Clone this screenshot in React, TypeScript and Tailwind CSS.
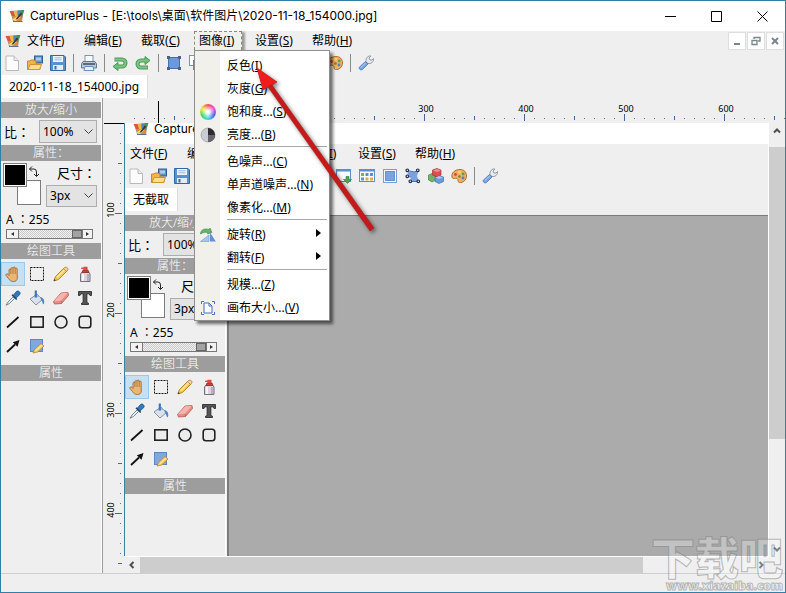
import { useId, type ReactNode } from "react";

function Svg({ children, size = 16 }: { children: ReactNode; size?: number }) {
  return (
    <svg width={size} height={size} viewBox="0 0 16 16" fill="none" aria-hidden="true" className="shrink-0">
      {children}
    </svg>
  );
}

const AppIcon = () => (
  <Svg>
    <path d="M1 3 L15 2 L13 13 L4 13 Z" fill="#8f9a80" />
    <path d="M0.500 3 H4.500 L6.500 8 H3 Z" fill="#d8553e" />
    <path d="M4.500 3 H8.500 L9 8 H6 Z" fill="#f2b642" />
    <path d="M8.500 2.500 H12 L10 8 H8.500 Z" fill="#4f83bd" />
    <path d="M12 2 H15.500 L12.500 9 H10 Z" fill="#3e9558" />
    <path d="M3 8 H12 L12.500 13 H5 Z" fill="#d98c3b" />
    <path d="M3.500 11.500 L9 7.500 L11 9.500 L6.500 13.500 Z" fill="#f4d97e" />
    <path d="M7.500 10 L12 4.500 L13.300 5.800 L8.700 11 L6.500 11.700 Z" fill="#3b3430" />
    <path d="M4 13.500 H13.500" stroke="#5d7088" />
  </Svg>
);

const NewIcon = () => (
  <Svg>
    <path d="M2 1 H10 L14.500 5.500 V15.500 H2 Z" fill="#fcfcfc" stroke="#b9b9b9" />
    <path d="M10 1 V5.500 H14.500" fill="#ececec" stroke="#b9b9b9" />
  </Svg>
);
const OpenIcon = () => (
  <Svg>
    <rect x="7.500" y="1" width="8" height="7" fill="#5f93c8" stroke="#2e5c92" />
    <rect x="9" y="2.500" width="5" height="3" fill="#a9cdec" />
    <path d="M0.500 14.500 V6 H3 L4 5 H7 L8 6 H9 V9 H13 V14.500 Z" fill="#efb54a" stroke="#c98a22" />
    <path d="M1 14.500 L3 9.500 H14.500 L12.500 14.500 Z" fill="#ffdd8c" stroke="#cf9430" />
  </Svg>
);
const SaveIcon = () => (
  <Svg>
    <path d="M0.500 0.500 H14 L15.500 2 V15.500 H0.500 Z" fill="#5793cf" stroke="#33679f" />
    <rect x="3" y="1" width="10" height="6" fill="#eef5fb" />
    <path d="M4.500 2.800 H11.500 M4.500 4.800 H11.500" stroke="#93bbdf" />
    <rect x="3" y="10" width="10" height="5" fill="#e4edf5" />
    <rect x="4.500" y="11" width="2" height="3.500" fill="#3a6da4" />
  </Svg>
);
const PrintIcon = () => (
  <Svg>
    <rect x="4" y="0.500" width="8" height="7" fill="#fafcff" stroke="#7e93ad" />
    <path d="M2 6.500 H14 L15.500 9 V13 H0.500 V9 Z" fill="#b9c6d6" stroke="#66788f" />
    <rect x="2" y="8" width="12" height="2" fill="#5c6b7e" />
    <path d="M4 11.500 H12 L13 15.500 H3 Z" fill="#e6f0fb" stroke="#6f8fb5" />
  </Svg>
);
const UndoIcon = () => (
  <Svg>
    <path d="M2.500 4.500 H10 A3.500 3.500 0 0 1 10 11.500 H5" stroke="#4b9a57" strokeWidth="4" />
    <path d="M6 7.500 L1 11.500 L6 15.500 Z" fill="#6dbd77" stroke="#4b9a57" />
    <path d="M3 4.500 H10 A3.500 3.500 0 0 1 10 11.500 H5" stroke="#7cc684" strokeWidth="2" />
  </Svg>
);
const RedoIcon = () => (
  <Svg>
    <path d="M11 5.500 H6 A3.500 3.500 0 0 0 6 12.500 H13" stroke="#4b9a57" strokeWidth="4" />
    <path d="M10 1.500 L15 5.500 L10 9.500 Z" fill="#6dbd77" stroke="#4b9a57" />
    <path d="M11 5.500 H6 A3.500 3.500 0 0 0 6 12.500 H12.500" stroke="#7cc684" strokeWidth="2" />
  </Svg>
);
const RegionIcon = () => (
  <Svg>
    <rect x="2.500" y="2.500" width="11" height="11" fill="#6c98dc" stroke="#4a6fa8" />
    {[1, 12].map((x) => [1, 12].map((y) => <rect key={x + "-" + y} x={x} y={y} width="3" height="3" fill="#4f6180" />))}
  </Svg>
);
const WindowsIcon = () => (
  <Svg>
    <rect x="0.500" y="0.500" width="10" height="10" fill="#fff" stroke="#6f95cb" />
    <rect x="4.500" y="5.500" width="10" height="9" fill="#dfeafa" stroke="#5b86c0" />
    <rect x="4.500" y="5" width="10" height="2" fill="#5b86c0" />
  </Svg>
);
const WindowDownIcon = () => (
  <Svg>
    <rect x="0.500" y="1.500" width="14" height="12" fill="#fbfdff" stroke="#5d8fcb" />
    <rect x="0.500" y="1.500" width="14" height="2" fill="#5d8fcb" />
    <path d="M10 8.500 H13 V11.500 H15.500 L11.500 15.500 L7.500 11.500 H10 Z" fill="#4da457" stroke="#2f7a3b" strokeWidth="0.600" />
  </Svg>
);
const WindowGridIcon = () => (
  <Svg>
    <rect x="0.500" y="1.500" width="15" height="12" fill="#fbfdff" stroke="#5d8fcb" />
    <rect x="0.500" y="1.500" width="15" height="2" fill="#5d8fcb" />
    <rect x="2" y="5" width="3" height="3" fill="#7fae5c" />
    <rect x="6.500" y="5" width="3" height="3" fill="#5f8fd0" />
    <rect x="11" y="5" width="3" height="3" fill="#5f8fd0" />
    <rect x="2" y="9.500" width="3" height="3" fill="#5f8fd0" />
    <rect x="6.500" y="9.500" width="3" height="3" fill="#e3a94b" />
    <rect x="11" y="9.500" width="3" height="3" fill="#e3a94b" />
  </Svg>
);
const FullscreenIcon = () => (
  <Svg>
    <rect x="1.500" y="1.500" width="13" height="13" fill="#f6faff" stroke="#7aa0d2" />
    <rect x="3.500" y="3.500" width="9" height="9" fill="#7ba3e0" stroke="#6890d0" />
  </Svg>
);
const PolygonIcon = () => (
  <Svg>
    <path d="M8 4 L13.500 3 L12 8 L14 14 H5 L6 9 L2.500 8 L3 3 Z" fill="#7ba3e0" />
    <path d="M2.500 2.500 L9 4 L13.500 2.500 M2.500 8.500 L6 9 M5 13.500 H14" stroke="#4b76b8" />
    {[[1, 1], [11.500, 1], [1, 7], [4, 12], [12, 12]].map(([x, y]) => (
      <circle key={x + "-" + y} cx={x + 1.300} cy={y + 1.300} r="1.300" fill="#e8eefb" stroke="#25344f" strokeWidth="1.200" />
    ))}
  </Svg>
);
const CubesIcon = () => (
  <Svg>
    <path d="M0.500 7 L4 5.500 L8 7 V12 L4 14 L0.500 12 Z" fill="#73b168" stroke="#4c8a45" strokeWidth="0.700" />
    <path d="M7 9 L11 7.500 L15.500 9 V13.500 L11 15.500 L7 13.500 Z" fill="#6d9bd8" stroke="#416da8" strokeWidth="0.700" />
    <path d="M4.500 2 L9 0.500 L13 2 V7 L9 9 L4.500 7 Z" fill="#dd4e4e" stroke="#a93030" strokeWidth="0.700" />
    <path d="M5 2.500 L9 4 L13 2.500 L9 1 Z" fill="#f09090" />
    <path d="M7.500 9.500 L11 11 L15 9.500 L11 8 Z" fill="#a9c8ef" />
  </Svg>
);
const PaletteIcon = () => (
  <Svg>
    <path d="M1 9 C0 5 4 1.500 9 1.500 C13 1.500 15.500 4 15.500 8 C15.500 12 12 15 8.500 14.500 C6 14 8 11.500 6 10.500 C4 9.500 2 12 1 9 Z" fill="#eeb067" stroke="#b36c28" />
    <circle cx="4.500" cy="6.500" r="1.400" fill="#d9483b" />
    <circle cx="8.500" cy="4.200" r="1.400" fill="#f6dc5a" />
    <circle cx="12.200" cy="6" r="1.400" fill="#58a05a" />
    <circle cx="12" cy="10" r="1.400" fill="#5182c4" />
    <circle cx="8.500" cy="8.500" r="1.300" fill="#6e8a3c" />
  </Svg>
);
const WrenchIcon = () => (
  <Svg>
    <path d="M8 6.500 C7.500 3 10 0.500 13 1 L11 3 L12 5 L14 5 L15.500 3.500 C16 7 13 9 10 8.500 Z" fill="#e6e9ee" stroke="#7e8896" strokeWidth="0.800" />
    <path d="M7.500 6.500 L10 9 L4.500 14.500 C3 16 0 13.500 1.500 12 Z" fill="#79a5e6" stroke="#4c74b5" strokeWidth="0.800" />
    <path d="M7.500 8 L3 12.500" stroke="#b4cef5" />
  </Svg>
);

const HandIcon = () => (
  <Svg>
    <path
      d="M4 9.500 V4 C4 2.800 5.900 2.800 5.900 4 V2.600 C5.900 1.200 8 1.200 8 2.600 V2 C8 0.600 10.200 0.600 10.200 2 V3 C10.200 1.800 12.200 1.800 12.200 3 V9 L12.300 12 C12.300 14.500 10.500 15.500 8.500 15.500 C6 15.500 4.800 14.500 3.500 12.500 L1 9.500 C0.300 8.200 2 7.200 3 8.300 Z"
      fill="#eab676"
      stroke="#a26a34"
      strokeWidth="0.900"
    />
    <path d="M5.900 4 V8 M8 3 V8 M10.200 3 V8" stroke="#a26a34" strokeWidth="0.800" />
  </Svg>
);
const MarqueeIcon = () => (
  <Svg>
    <rect x="1.500" y="1.500" width="13" height="13" stroke="#111" strokeDasharray="2 1" />
  </Svg>
);
const PencilIcon = () => (
  <Svg>
    <path d="M0.800 15 L2.500 10.500 L11 2 L14 5 L5.500 13.500 Z" fill="#f5c84b" stroke="#b07d1e" strokeWidth="0.900" />
    <path d="M10.500 2.500 L12 1.200 C13.500 0.500 15.800 2.500 14.900 4 L13.500 5.500 Z" fill="#f0d0a0" stroke="#a8773b" strokeWidth="0.700" />
    <path d="M4 11.500 L11.500 4" stroke="#fce9a0" strokeWidth="1.400" />
    <path d="M0.800 15 L1.500 13 L2.800 14.300 Z" fill="#333" />
  </Svg>
);
const SprayIcon = () => (
  <Svg>
    <path d="M3.500 15.500 V8 L5 6 H11.500 L13 8 V15.500 Z" fill="#d9d5de" stroke="#77717e" />
    <path d="M5 6.500 L6 4 H11 L12 6.500 Z" fill="#c8413d" stroke="#8c2622" strokeWidth="0.700" />
    <path d="M6.500 0.800 H10.500 V4 H6.500 Z M4.500 1.500 H7 V3 H4 Z" fill="#e04844" />
    <path d="M6 8 V15" stroke="#fff" strokeWidth="1.500" />
    <path d="M11 8 V15" stroke="#a9a3b0" strokeWidth="1.500" />
  </Svg>
);
const DropperIcon = () => (
  <Svg>
    <path d="M8 5.500 L11.500 1.500 C13.500 0 16 2.500 14.800 4.500 L10.800 8.300 Z" fill="#2f7bbf" stroke="#1d5288" strokeWidth="0.800" />
    <path d="M7 4.800 L11.700 9.500" stroke="#23446b" strokeWidth="1.500" />
    <path d="M8 7 L3 12 L1 15.200 L4.500 13.500 L9.500 8.500 Z" fill="#dcecf8" stroke="#5d7387" strokeWidth="0.800" />
  </Svg>
);
const BucketIcon = () => (
  <Svg>
    <path d="M1 9 L8 4 L13.500 9.500 L7 15 Z" fill="#dbe1ea" stroke="#7c8798" strokeWidth="0.900" />
    <path d="M4 7.500 L8.500 4.500 L11 7 Z" fill="#9fbbe0" />
    <path d="M6.800 0.500 V7.500" stroke="#3c76b8" strokeWidth="2.200" />
    <path d="M12 7 C15.500 8.500 15.800 12 14.800 14.500 C13 13.500 13.500 10.500 11.500 9 Z" fill="#4d86cc" />
  </Svg>
);
const EraserIcon = () => (
  <Svg>
    <path d="M0.500 11.500 L8 3 L15 2.500 L15.500 5.500 L8.500 13.500 L1.500 14 Z" fill="#e88c86" stroke="#b35853" strokeWidth="0.800" />
    <path d="M1 11.300 L8.200 3.300 L14.800 2.800 L8 10.800 Z" fill="#f6b3ac" />
    <path d="M8 10.800 L8.500 13.500" stroke="#b35853" strokeWidth="0.700" />
  </Svg>
);
const TextIcon = () => (
  <Svg>
    <path d="M1.500 1.500 H14.500 V5.500 H13 L12 3.800 H9.900 V12.500 L11.500 13.200 V14.500 H4.500 V13.200 L6.100 12.500 V3.800 H4 L3 5.500 H1.500 Z" fill="#555" stroke="#222" strokeWidth="0.800" />
  </Svg>
);
const LineIcon = () => (
  <Svg>
    <path d="M2 13.500 L13.500 3" stroke="#111" strokeWidth="1.700" />
  </Svg>
);
const RectIcon = () => (
  <Svg>
    <rect x="1.800" y="2.800" width="12.400" height="10.400" fill="#ececec" stroke="#222" strokeWidth="1.600" />
  </Svg>
);
const EllipseIcon = () => (
  <Svg>
    <circle cx="8" cy="8" r="6" fill="#ececec" stroke="#222" strokeWidth="1.600" />
  </Svg>
);
const RoundRectIcon = () => (
  <Svg>
    <rect x="2.200" y="2.200" width="11.600" height="11.600" rx="2.800" fill="#ececec" stroke="#222" strokeWidth="1.600" />
  </Svg>
);
const ArrowIcon = () => (
  <Svg>
    <path d="M2 14 L10 6.500" stroke="#111" strokeWidth="1.800" />
    <path d="M14.500 2 L12.500 8.800 L7.800 4.200 Z" fill="#111" />
  </Svg>
);
const NoteIcon = () => (
  <Svg>
    <rect x="1.500" y="1.500" width="12" height="12" fill="#7fa8dc" stroke="#5e87bd" />
    <path d="M4 15 L5.500 11.500 L12 5.500 L15 8 L8.500 14 Z" fill="#f7d36c" stroke="#b5852b" strokeWidth="0.800" />
    <path d="M7 12.500 L13 7" stroke="#fff2b5" />
  </Svg>
);

const ColorWheel = () => (
  <span className="size-4 rounded-full bg-[radial-gradient(circle,#ffffff_10%,transparent_60%),conic-gradient(#f0505a,#f050e0,#5060f0,#40d8f0,#40d860,#f0e840,#f0505a)]" />
);
const ContrastIcon = () => (
  <Svg>
    <circle cx="8" cy="8" r="7" fill="#c9ccd3" stroke="#999" strokeWidth="0.700" />
    <path d="M8 1 A7 7 0 0 1 8 15 Z" fill="#2c2c30" />
    <path d="M8 8 H15 A7 7 0 0 1 8 15 Z" fill="#66666c" />
  </Svg>
);
const RotateIcon = () => (
  <Svg>
    <path d="M0.500 14.500 L9 8 V14.500 Z" fill="#a7c8ee" stroke="#6c98cc" strokeWidth="0.600" />
    <path d="M10 5.500 L15.800 14.500 H10 Z" fill="#5f91d2" />
    <path d="M0.500 7 C0.500 2.500 5 1 9 2.500 L10 1 L12 5.500 L7.500 7 L8 5.500 C5 5 3 5.500 0.500 7 Z" fill="#69b06b" stroke="#3d8a45" strokeWidth="0.600" />
  </Svg>
);
const CanvasIcon = () => (
  <Svg>
    <path d="M1.500 4 V1.500 H4 M12 1.500 H14.500 V4 M1.500 12 V14.500 H4 M12 14.500 H14.500 V12" stroke="#4a6fc0" />
    <path d="M4 3 H9 L12 6 V13 H4 Z" fill="#f8faff" stroke="#4a6fc0" />
    <path d="M9 3 V6 H12" stroke="#4a6fc0" />
  </Svg>
);

type Item = { label: string; key: string; icon?: ReactNode; sub?: boolean };
const imageMenu: Item[][] = [
  [
    { label: "反色", key: "I" },
    { label: "灰度", key: "G" },
    { label: "饱和度...", key: "S", icon: <ColorWheel /> },
    { label: "亮度...", key: "B", icon: <ContrastIcon /> },
  ],
  [
    { label: "色噪声...", key: "C" },
    { label: "单声道噪声...", key: "N" },
    { label: "像素化...", key: "M" },
  ],
  [
    { label: "旋转", key: "R", icon: <RotateIcon />, sub: true },
    { label: "翻转", key: "F", sub: true },
  ],
  [
    { label: "规模...", key: "Z" },
    { label: "画布大小...", key: "V", icon: <CanvasIcon /> },
  ],
];

const Mnemonic = ({ label, k }: { label: string; k: string }) => (
  <span className="whitespace-nowrap">
    {label}(<u>{k}</u>)
  </span>
);

function ImageMenu() {
  return (
    <div role="menu" className="absolute top-[19px] left-px z-20 w-[136px] border border-[#8f8f8f] bg-[linear-gradient(to_right,#f1f0eb_25px,#ffffff_25px)] pt-[3px] pb-px shadow-[3px_3px_3px_rgba(0,0,0,0.55)]">
      {imageMenu.map((group, i) => (
        <div key={i}>
          {i > 0 && <div className="mr-[2px] ml-8 h-1 border-t border-[#a8a8a8]" />}
          {group.map((item) => (
            <button key={item.key} role="menuitem" className="flex h-[23px] w-full items-center gap-[7px] pr-2 pl-[5px] text-left">
              <span className="flex w-5 items-center">{item.icon}</span>
              <span className="flex-1">
                <Mnemonic label={item.label} k={item.key} />
              </span>
              {item.sub && (
                <svg width="5" height="8" viewBox="0 0 5 8" className="mb-1" aria-hidden="true">
                  <path d="M0 0 L5 4 L0 8 Z" fill="#000" />
                </svg>
              )}
            </button>
          ))}
        </div>
      ))}
    </div>
  );
}

const menus = [
  ["文件", "F"],
  ["编辑", "E"],
  ["截取", "C"],
  ["图像", "I"],
  ["设置", "S"],
  ["帮助", "H"],
];

function MenuBar({ open, icon }: { open?: boolean; icon?: boolean }) {
  return (
    <nav className="flex h-5 shrink-0 items-stretch">
      {icon && (
        <span className="flex w-[21px] items-center pl-1">
          <AppIcon />
        </span>
      )}
      {menus.map(([label, k]) => (
        <div key={k} className="relative w-[57px] shrink-0">
          <button
            className={
              open && k === "I"
                ? "ml-px flex h-[19px] w-12 items-center border border-b-0 border-dashed border-[#8a8a7a] bg-[#f1f1ec] pl-1 shadow-[3px_1px_2px_rgba(0,0,0,0.35)]"
                : "flex h-5 items-center pl-[5px]"
            }
          >
            <Mnemonic label={label} k={k} />
          </button>
          {open && k === "I" && <ImageMenu />}
        </div>
      ))}
      {icon && (
        <div className="ml-auto flex gap-px pt-px pr-px">
          {["最小化", "还原", "关闭"].map((name, i) => (
            <button key={name} aria-label={name} className="flex size-[18px] items-center justify-center border border-[#dedede] bg-white">
              <svg width="10" height="10" viewBox="0 0 10 10" fill="none" stroke="#7a868c" strokeWidth="2" aria-hidden="true">
                {i === 0 && <path d="M2 8 H8" />}
                {i === 1 && <path d="M3 3 V1.500 H9 V5 H7 M1 4.500 H6 V8.500 H1 Z" strokeWidth="1.300" />}
                {i === 2 && <path d="M2 2 L8 8 M8 2 L2 8" />}
              </svg>
            </button>
          ))}
        </div>
      )}
    </nav>
  );
}

const toolbarGroups: [string, () => ReactNode][][] = [
  [["新建", NewIcon], ["打开", OpenIcon], ["保存", SaveIcon]],
  [["打印", PrintIcon]],
  [["撤消", UndoIcon], ["重做", RedoIcon]],
  [
    ["区域", RegionIcon],
    ["窗口", WindowsIcon],
    ["滚动窗口", WindowDownIcon],
    ["窗口网格", WindowGridIcon],
    ["全屏", FullscreenIcon],
    ["多边形", PolygonIcon],
    ["对象", CubesIcon],
    ["调色板", PaletteIcon],
  ],
  [["选项", WrenchIcon]],
];

function Toolbar() {
  return (
    <div role="toolbar" className="-ml-px flex h-[23px] shrink-0 items-center">
      {toolbarGroups.map((group, i) => (
        <div key={i} className="flex shrink-0 items-center">
          {i > 0 && (
            <span className="flex w-2 justify-center">
              <span className="h-[18px] w-px bg-[#8a8a8a]" />
            </span>
          )}
          {group.map(([name, Icon]) => (
            <button key={name} aria-label={name} className="flex h-[22px] w-[23px] items-center justify-center">
              <Icon />
            </button>
          ))}
        </div>
      ))}
    </div>
  );
}

const tools: [string, () => ReactNode][] = [
  ["移动", HandIcon],
  ["选择", MarqueeIcon],
  ["铅笔", PencilIcon],
  ["喷枪", SprayIcon],
  ["吸管", DropperIcon],
  ["填充", BucketIcon],
  ["橡皮", EraserIcon],
  ["文字", TextIcon],
  ["直线", LineIcon],
  ["矩形", RectIcon],
  ["椭圆", EllipseIcon],
  ["圆角矩形", RoundRectIcon],
  ["箭头", ArrowIcon],
  ["便笺", NoteIcon],
];

const Header = ({ children }: { children: ReactNode }) => (
  <h2 className="h-4 bg-[#9d9d9d] text-center text-[12px] leading-4 font-light text-white">{children}</h2>
);

function Combo({ id, value, className }: { id: string; value: string; className: string }) {
  return (
    <div className={"relative " + className}>
      <select id={id} className="h-full w-full appearance-none border border-[#adadad] bg-[#e3e3e3] pl-[3px] text-[12px] text-black">
        <option>{value}</option>
      </select>
      <svg width="9" height="6" viewBox="0 0 9 6" fill="none" className="pointer-events-none absolute top-1/2 right-1 -translate-y-1/2" aria-hidden="true">
        <path d="M0.500 0.500 L4.500 4.500 L8.500 0.500" stroke="#444" />
      </svg>
    </div>
  );
}

function SidePanel() {
  const id = useId();
  return (
    <aside className="w-[101px] shrink-0 border-r border-white pt-1">
      <Header>放大/缩小</Header>
      <div className="flex h-[27px] items-center justify-between pr-1 pl-[3px]">
        <label htmlFor={id + "zoom"} className="w-[35px] whitespace-nowrap font-['Noto_Sans_CJK_TC',sans-serif] text-[13px]">比：</label>
        <Combo id={id + "zoom"} value="100%" className="h-[23px] w-[58px]" />
      </div>
      <Header>属性：</Header>
      <div className="flex h-[49px] justify-between pt-[2px] pr-1 pl-[2px]">
        <div className="grid h-[42px] w-10 grid-cols-[14px_10px_14px] grid-rows-[17px_7px_18px]">
          <button aria-label="背景色" className="col-start-2 col-end-4 row-start-2 row-end-4 border border-[#7c7c7c] bg-white" />
          <button aria-label="前景色" className="col-start-1 col-end-3 row-start-1 row-end-3 border border-[#7c7c7c] bg-black outline-1 -outline-offset-2 outline-white" />
          <button aria-label="交换颜色" className="col-start-3 row-start-1 pl-[2px]">
            <svg width="10" height="12" viewBox="0 0 10 12" fill="none" stroke="#222" aria-hidden="true">
              <path d="M3 0.500 L0.500 3 L3 5.500 M0.500 3 H5 Q7.500 3 7.500 6 V10 M5 8 L7.500 10.500 L10 8" />
            </svg>
          </button>
        </div>
        <div className="flex w-[51px] flex-col gap-[2px]">
          <label htmlFor={id + "size"} className="h-5 whitespace-nowrap pl-[11px] font-['Noto_Sans_CJK_TC',sans-serif] text-[13px] leading-5">尺寸：</label>
          <Combo id={id + "size"} value="3px" className="h-[22px] w-full" />
        </div>
      </div>
      <div className="h-[33px] pr-2 pl-[5px]">
        <label htmlFor={id + "alpha"} className="block h-[19px] whitespace-pre font-['Noto_Sans','Noto_Sans_CJK_TC',sans-serif] text-[12px] leading-[19px]">A ：255</label>
        <div className="flex h-[10px] items-stretch border border-[#777]">
          <button aria-label="减小" className="flex w-3 items-center justify-center border-r border-[#777] bg-[#f2f2f2]">
            <svg width="3" height="4" viewBox="0 0 3 4" aria-hidden="true"><path d="M3 0 V4 L0 2 Z" fill="#333" /></svg>
          </button>
          <input
            id={id + "alpha"}
            type="range"
            min="0"
            max="255"
            defaultValue="255"
            className="h-2 w-0 flex-1 appearance-none bg-[repeating-conic-gradient(#c9c9c9_0_25%,#f2f2f2_0_50%)] bg-size-[2px_2px] [&::-webkit-slider-thumb]:h-2 [&::-webkit-slider-thumb]:w-[10px] [&::-webkit-slider-thumb]:appearance-none [&::-webkit-slider-thumb]:border [&::-webkit-slider-thumb]:border-[#666] [&::-webkit-slider-thumb]:bg-[#a3a3a3]"
          />
          <button aria-label="增大" className="flex w-[10px] items-center justify-center border-l border-[#777] bg-[#f2f2f2]">
            <svg width="3" height="4" viewBox="0 0 3 4" aria-hidden="true"><path d="M0 0 V4 L3 2 Z" fill="#333" /></svg>
          </button>
        </div>
      </div>
      <Header>绘图工具</Header>
      <div className="grid grid-cols-[repeat(4,24px)] pt-[3px] pb-[7px]">
        {tools.map(([name, Icon], i) => (
          <button
            key={name}
            aria-label={name}
            className={"flex h-6 items-center justify-center border " + (i === 0 ? "border-[#9cc9ea] bg-[#c6e0f3]" : "border-transparent")}
          >
            <Icon />
          </button>
        ))}
      </div>
      <Header>属性</Header>
    </aside>
  );
}

const hundreds = [3, 4, 5, 6];
const tens = Array.from({ length: 120 }, (_, i) => i);

function TopRuler() {
  return (
    <svg className="h-[25px] w-full shrink-0" aria-hidden="true">
      {tens.slice(1).map((n) => {
        const x = 21 + n * 10;
        if (n % 10 === 0) return <rect key={n} x={x} y="16" width="1" height="7" fill="#45649a" />;
        if (n % 5 === 0) return <rect key={n} x={x} y="18" width="1" height="4" fill="#45649a" />;
        return <rect key={n} x={x} y="20" width="1" height="1" fill="#5b74a3" />;
      })}
      {hundreds.map((h) => (
        <text key={h} x={h * 100 + 23} y="14" textAnchor="middle" className="fill-black font-['Noto_Sans'] text-[9px]">
          {h * 100}
        </text>
      ))}
      <rect x="55" y="3" width="1" height="22" fill="#000" />
    </svg>
  );
}

function LeftRuler() {
  return (
    <svg className="h-full w-[21px] shrink-0" aria-hidden="true">
      <rect x="1" y="0" width="20" height="1" fill="#000" />
      {tens.slice(2).map((n) => {
        const y = n * 10 - 10;
        if (n % 10 === 0) return <rect key={n} x="12" y={y} width="7" height="1" fill="#45649a" />;
        if (n % 5 === 0) return <rect key={n} x="15" y={y} width="4" height="1" fill="#45649a" />;
        return <rect key={n} x="17" y={y} width="1" height="1" fill="#5b74a3" />;
      })}
      {[1, 2, 3, 4].map((h) => (
        <text key={h} x={-(h * 100 - 13)} y="11" textAnchor="middle" transform="rotate(-90)" className="fill-black font-['Noto_Sans'] text-[9px]">
          {h * 100}
        </text>
      ))}
    </svg>
  );
}

function Chevron({ d, label }: { d: string; label: string }) {
  return (
    <button aria-label={label} className="flex size-4 shrink-0 items-center justify-center">
      <svg width="8" height="8" viewBox="0 0 8 8" fill="none" stroke="#505050" strokeWidth="2" aria-hidden="true">
        <path d={d} />
      </svg>
    </button>
  );
}

function Chrome({ title, tab, nested, children }: { title: string; tab: string; nested?: boolean; children: ReactNode }) {
  return (
    <>
      <header className="flex h-[30px] shrink-0 items-center bg-white pl-2">
        <AppIcon />
        <h1 className="ml-[5px] flex-1 whitespace-nowrap font-['Inter','Noto_Sans_CJK_SC',sans-serif] text-[12px]">{title}</h1>
        {!nested && (
          <div className="flex">
            {["M0 5.500 H11", "M0.500 0.500 H10.500 V10.500 H0.500 Z", "M0.500 0.500 L10.500 10.500 M10.500 0.500 L0.500 10.500"].map((d, i) => (
              <button key={d} aria-label={["最小化", "最大化", "关闭"][i]} className="flex h-7 w-[46px] items-center justify-center">
                <svg width="11" height="11" viewBox="0 0 11 11" fill="none" stroke="#000" aria-hidden="true">
                  <path d={d} />
                </svg>
              </button>
            ))}
          </div>
        )}
      </header>
      <MenuBar open={!nested} icon={!nested} />
      <Toolbar />
      <div className="flex h-6 shrink-0 items-stretch pt-px">
        <button className="border-r border-[#dcdcdc] bg-white px-2 text-[12px]">{tab}</button>
      </div>
      <div className="flex min-h-0 flex-1">
        <SidePanel />
        {children}
      </div>
    </>
  );
}

export default function App() {
  return (
    <div className="relative flex h-screen flex-col overflow-hidden border border-[#2f7fa8] bg-[#efefef] font-['Noto_Sans','Noto_Sans_CJK_SC',sans-serif] text-[12px] text-black">
      <Chrome title="CapturePlus - [E:\tools\桌面\软件图片\2020-11-18_154000.jpg]" tab="2020-11-18_154000.jpg">
        <main className="flex min-w-0 flex-1 flex-col border-l border-[#9a9a9a]">
          <TopRuler />
          <div className="flex min-h-0 flex-1">
            <LeftRuler />
            <div className="flex min-w-0 flex-1 flex-col">
              <div className="flex min-h-0 flex-1">
                <div className="min-w-0 flex-1 overflow-hidden border-r border-b border-white">
                  <div className="-mt-[9px] flex h-[600px] flex-col border-l border-[#3d7f9f] bg-[#efefef]">
                    <Chrome title="CapturePlus" tab="无截取" nested>
                      <div className="mt-1 ml-px flex-1 border-t border-l-2 border-[#7b7b7b] bg-[#ababab]" />
                    </Chrome>
                  </div>
                </div>
                <div className="flex w-4 shrink-0 flex-col">
                  <Chevron label="向上" d="M1 5.500 L4 2.500 L7 5.500" />
                  <div className="mt-2 min-h-0 flex-1">
                    <div className="h-[74%] bg-[#cdcdcd]" />
                  </div>
                  <Chevron label="向下" d="M1 2.500 L4 5.500 L7 2.500" />
                </div>
              </div>
              <div className="flex h-4 shrink-0 pr-4">
                <Chevron label="向左" d="M5.500 1 L2.500 4 L5.500 7" />
                <div className="min-w-0 flex-1">
                  <div className="h-full w-[82%] bg-[#cdcdcd]" />
                </div>
                <Chevron label="向右" d="M2.500 1 L5.500 4 L2.500 7" />
              </div>
            </div>
          </div>
        </main>
      </Chrome>
      <footer className="h-[19px] shrink-0 border-t border-[#cfcfcf]" />

      <svg width="130" height="180" viewBox="0 0 130 180" className="pointer-events-none absolute top-[60px] left-[250px] z-30 drop-shadow-[2px_2px_2px_rgba(0,0,0,0.5)]" aria-hidden="true">
        <path d="M6 7 L26 21 L21 24 L123 167 L119 170 L17 26 L12 29 Z" fill="#c41a1a" stroke="#b01515" strokeWidth="0.500" strokeLinejoin="round" />
        <path d="M6 7 L26 21 L19 24 L12 29 Z" fill="#ee1c1c" />
      </svg>

      <div className="pointer-events-none absolute right-0 bottom-0 z-30 flex flex-col items-end pr-[2px] font-black text-white/30 [-webkit-text-stroke:1px_rgba(120,120,120,0.5)]">
        <span className="text-[44px] leading-[44px]">下载吧</span>
        <span className="text-[12px] leading-3">www.xiazaiba.com</span>
      </div>
    </div>
  );
}
